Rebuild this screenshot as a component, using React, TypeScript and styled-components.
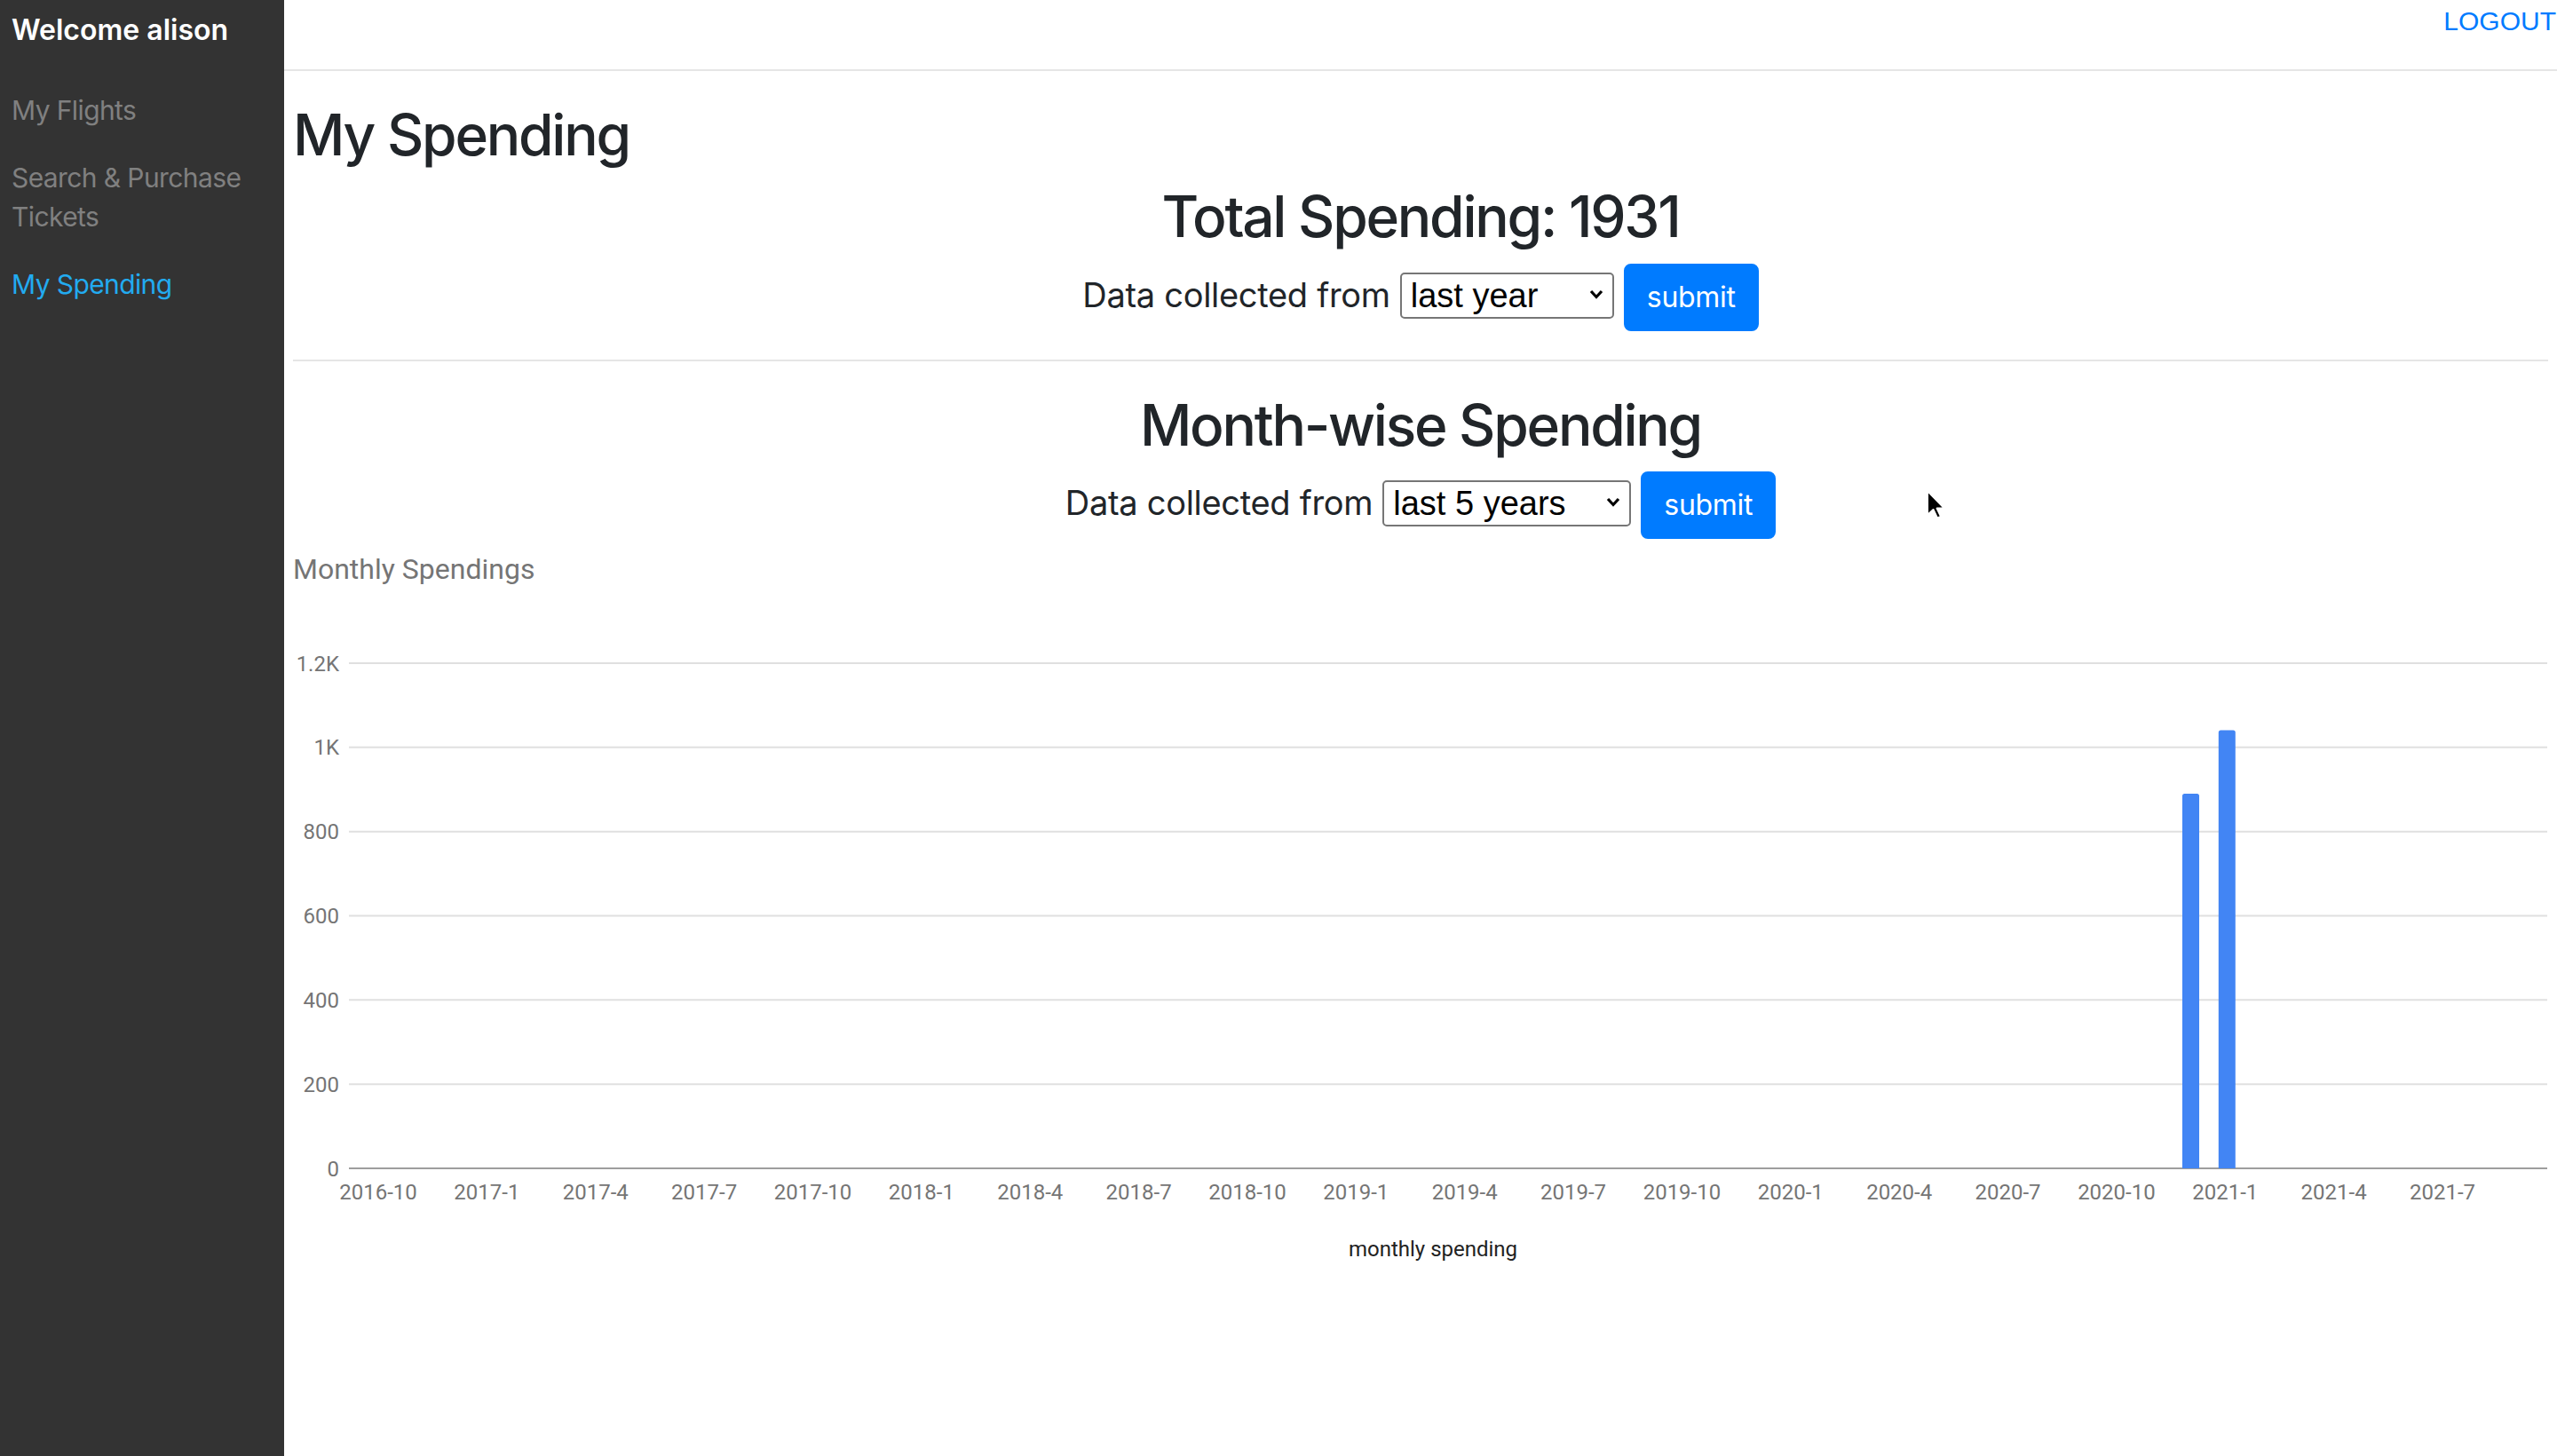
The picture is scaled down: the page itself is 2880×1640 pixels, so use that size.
import React from "react";
import styled, { createGlobalStyle } from "styled-components";

const GlobalStyle = createGlobalStyle`
  html, body {
    margin: 0;
    padding: 0;
  }
  body {
    font-family: Inter, "Noto Sans", sans-serif;
    color: #212529;
    background: #fff;
  }
  * {
    box-sizing: border-box;
  }
`;

const Page = styled.div`
  position: relative;
  display: flex;
  min-height: 1640px;
  width: 100%;
`;

const Sidebar = styled.aside`
  flex: 0 0 320px;
  width: 320px;
  background: #333333;
  padding: 12px 13px 0;
`;

const Welcome = styled.div`
  font-size: 32px;
  font-weight: 600;
  line-height: 44px;
  color: #ffffff;
`;

const NavList = styled.nav`
  display: flex;
  flex-direction: column;
  padding-top: 30px;
`;

const NavItem = styled.a<{ $active?: boolean }>`
  display: block;
  padding: 16px 0;
  font-size: 30px;
  line-height: 44px;
  letter-spacing: -0.6px;
  color: ${(p) => (p.$active ? "#22abf0" : "#808080")};
  text-decoration: none;
`;

const Main = styled.main`
  flex: 1;
  min-width: 0;
  display: flex;
  flex-direction: column;
`;

const TopBar = styled.header`
  height: 80px;
  border-bottom: 2px solid #e6e6e6;
  display: flex;
  justify-content: flex-end;
  align-items: flex-start;
  padding: 9px 1px 0 0;
`;

const Logout = styled.a`
  font-family: "Liberation Sans", Arial, sans-serif;
  font-size: 30px;
  line-height: 30px;
  color: #007bff;
  text-decoration: none;
`;

const Content = styled.div`
  padding: 0 10px;
`;

const PageTitle = styled.h1`
  font-size: 64px;
  font-weight: 500;
  line-height: 1.2;
  letter-spacing: -0.035em;
  margin: 34px 0 13px;
`;

const SectionTitle = styled.h2`
  font-size: 64px;
  font-weight: 500;
  line-height: 1.2;
  letter-spacing: -0.035em;
  text-align: center;
  padding-top: 2px;
  margin: 0 0 14px;
`;

const FilterRow = styled.form`
  display: flex;
  justify-content: center;
  align-items: baseline;
  gap: 11px;
  margin: 0;
`;

const FilterLabel = styled.label`
  font-size: 38px;
  line-height: 1.5;
  letter-spacing: -0.3px;
`;

const SelectWrap = styled.span`
  position: relative;
  display: inline-block;
`;

const Select = styled.select<{ $w: number }>`
  appearance: none;
  width: ${(p) => p.$w}px;
  height: 52px;
  border: 2px solid #767676;
  border-radius: 5px;
  background: #fff;
  color: #000;
  font-family: "Liberation Sans", Arial, sans-serif;
  font-size: 38px;
  line-height: 48px;
  padding: 0 40px 0 10px;
`;

const Chevron = styled.svg`
  position: absolute;
  right: 12px;
  top: 19px;
  pointer-events: none;
`;

const SubmitButton = styled.button`
  font-family: Inter, sans-serif;
  font-size: 32px;
  line-height: 48px;
  letter-spacing: -0.3px;
  padding: 12px 24px;
  border: 2px solid #007bff;
  border-radius: 8px;
  background: #007bff;
  color: #fff;
`;

const Divider = styled.hr`
  margin: 32px 0;
  border: 0;
  border-top: 2px solid rgba(0, 0, 0, 0.1);
`;

const ChartSvg = styled.svg`
  display: block;
  font-family: Roboto, "Liberation Sans", sans-serif;
`;

const Pointer = styled.svg`
  position: absolute;
  left: 2168px;
  top: 550px;
`;

// chart geometry, in chart-local pixels (chart origin = page x 330, y 607)
const OX = 330;
const OY = 607;
const AXIS_Y = 1316 - OY;
const PX_PER_UNIT = 569 / 1200;
const PLOT_LEFT = 393 - OX;
const PLOT_RIGHT = 2869 - OX;
const MONTH_W = 40.79;
const FIRST_TICK_X = 426 - OX;

const yTicks = [0, 200, 400, 600, 800, 1000, 1200];
const fmtY = (v: number) => (v >= 1000 ? `${v / 1000}K` : `${v}`);
const yPos = (v: number) => AXIS_Y - v * PX_PER_UNIT;

const xTicks = Array.from({ length: 20 }, (_, i) => {
  const m = 9 + i * 3;
  return { label: `${2016 + Math.floor(m / 12)}-${(m % 12) + 1}`, idx: i * 3 };
});

const spending = [
  { month: 50, value: 890 },
  { month: 51, value: 1041 },
];

const barPath = (cx: number, top: number, w: number, r: number) => {
  const x = cx - w / 2;
  return `M${x},${AXIS_Y} V${top + r} Q${x},${top} ${x + r},${top} H${x + w - r} Q${x + w},${top} ${x + w},${top + r} V${AXIS_Y} Z`;
};

const SpendingChart = () => (
  <ChartSvg width={2540} height={830} viewBox="0 0 2540 830">
    <text x={0} y={45} fontSize={32} fill="#757575">
      Monthly Spendings
    </text>
    {yTicks.map((v) => (
      <g key={v}>
        <line
          x1={PLOT_LEFT}
          x2={PLOT_RIGHT}
          y1={yPos(v)}
          y2={yPos(v)}
          stroke={v === 0 ? "#9e9e9e" : "#e0e0e0"}
          strokeWidth={2}
        />
        <text x={52} y={yPos(v) + 8.5} fontSize={24} fill="#757575" textAnchor="end">
          {fmtY(v)}
        </text>
      </g>
    ))}
    {spending.map((b) => (
      <path
        key={b.month}
        d={barPath(FIRST_TICK_X + 2 + b.month * MONTH_W, yPos(b.value), 19, 2.5)}
        fill="#4285f4"
      />
    ))}
    {xTicks.map((t) => (
      <text
        key={t.label}
        x={FIRST_TICK_X + t.idx * MONTH_W}
        y={744}
        fontSize={24}
        fill="#757575"
        textAnchor="middle"
      >
        {t.label}
      </text>
    ))}
    <text x={1284} y={808} fontSize={24} fill="#222" textAnchor="middle">
      monthly spending
    </text>
  </ChartSvg>
);

const PeriodFilter = ({ value, width }: { value: string; width: number }) => (
  <FilterRow onSubmit={(e) => e.preventDefault()}>
    <FilterLabel>Data collected from</FilterLabel>
    <SelectWrap>
      <Select $w={width} defaultValue={value}>
        <option>last month</option>
        <option>last year</option>
        <option>last 5 years</option>
      </Select>
      <Chevron width="16" height="11" viewBox="0 0 16 11">
        <path d="M2 2 L8 8.5 L14 2" fill="none" stroke="#000" strokeWidth="3.2" />
      </Chevron>
    </SelectWrap>
    <SubmitButton type="submit">submit</SubmitButton>
  </FilterRow>
);

export default function App() {
  return (
    <Page>
      <GlobalStyle />
      <Sidebar>
        <Welcome>Welcome alison</Welcome>
        <NavList>
          <NavItem href="#">My Flights</NavItem>
          <NavItem href="#">Search &amp; Purchase Tickets</NavItem>
          <NavItem href="#" $active>
            My Spending
          </NavItem>
        </NavList>
      </Sidebar>
      <Main>
        <TopBar>
          <Logout href="#">LOGOUT</Logout>
        </TopBar>
        <Content>
          <PageTitle>My Spending</PageTitle>
          <SectionTitle>Total Spending: 1931</SectionTitle>
          <PeriodFilter value="last year" width={241} />
          <Divider />
          <SectionTitle>Month-wise Spending</SectionTitle>
          <PeriodFilter value="last 5 years" width={280} />
          <SpendingChart />
        </Content>
      </Main>
      <Pointer width="26" height="38" viewBox="0 0 26 38">
        <path
          d="M3 3 L3 30 L9.5 24 L14 33.5 L18 31.8 L13.6 22.6 L22 22.6 Z"
          fill="#000"
          stroke="#fff"
          strokeWidth="2"
          strokeLinejoin="round"
        />
      </Pointer>
    </Page>
  );
}
